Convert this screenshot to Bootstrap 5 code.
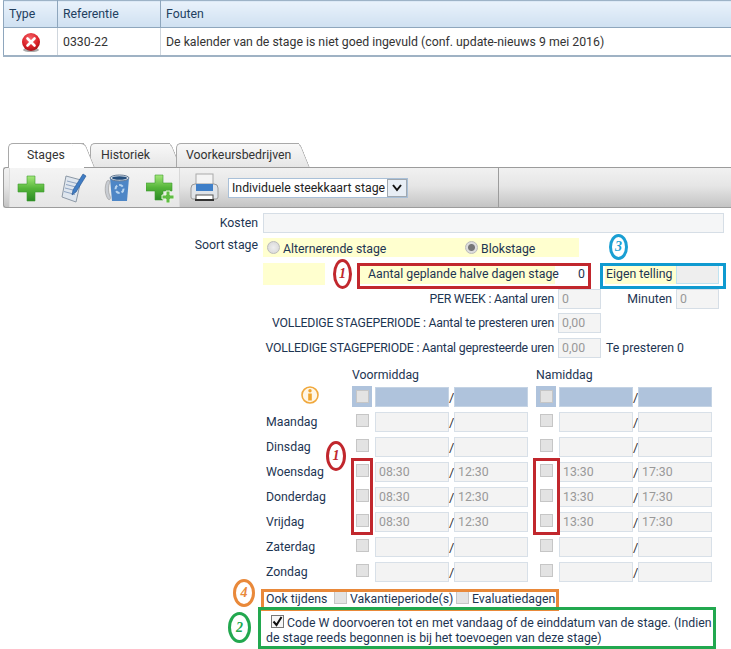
<!DOCTYPE html>
<html lang="nl">
<head>
<meta charset="utf-8">
<title>Stages</title>
<link href="https://cdn.jsdelivr.net/npm/bootstrap@5.3.0/dist/css/bootstrap.min.css" rel="stylesheet">
<style>
html,body{margin:0;background:#fff}
body{width:731px;height:649px;overflow:hidden;font-family:Roboto,"Noto Sans",sans-serif;font-size:12.300px;color:#1d3552;line-height:16px}
.err-wrap{padding:0 0 0 3px;height:142px}
.err-tbl{width:728px;border-collapse:collapse;table-layout:fixed;color:#333}
.err-tbl th{font-weight:400;height:27px;padding:0 5px;background:linear-gradient(#e9f2fb,#cfe0f1);border:1px solid #8ea6bd;border-top-color:#9db3c7;color:#22405f}
.err-tbl td{height:28px;padding:2px 5px 0;border:1px solid #cfd6dd;border-bottom:2px solid #9fb2c4}
.err-tbl td:first-child,.err-tbl th:first-child{border-left:1px solid #8ea6bd}
.err-tbl td:last-child,.err-tbl th:last-child{border-right:0}
.tabstrip{height:25px;padding-left:8px;align-items:flex-end;position:relative;z-index:2}
.tabx{position:relative;height:24px;line-height:23px;color:#333;background:linear-gradient(#f8f8f8,#e6e6e6);border:1px solid #a9a9a9;border-bottom:0;border-right:0;border-radius:5px 0 0 0}
.tabx::after{content:"";position:absolute;top:-1px;right:-6px;width:14px;height:24px;background:inherit;border:1px solid #a9a9a9;border-bottom:0;border-left:0;border-radius:0 5px 0 0;transform:skewX(22deg);z-index:-1}
.tabx.on{background:#fff;z-index:3;height:25px;margin-bottom:-1px}
.tabx.t1{width:76px;padding-left:18px;margin-right:6px}.tabx.t2{width:80px;padding-left:10px;margin-right:6px}.tabx.t3{width:123px;padding-left:9px}
.toolbar{height:41px;margin-left:3px;background:linear-gradient(#f1f1f1 0,#e6e6e6 45%,#c4c4c4 100%);border:1px solid #9c9c9c;border-right:0;border-radius:3px 0 0 3px;position:relative}
.toolgrp{margin:0 0 0 5px;width:171px;height:39px;background:linear-gradient(#f4f4f4,#e6e6e6);border-right:1px solid #d8d8d8;border-left:1px solid #dcdcdc;gap:15px;padding:3px 0 3px 7px}
.toolgrp2{padding-left:9px;gap:8px;flex:0 0 319px;border-right:1px solid #9c9c9c;height:39px}
.pick{width:180px;height:20px;border:1px solid #a9c0d8;border-radius:0;padding:0 20px 0 3px;font:12.300px Roboto,sans-serif;color:#222;background:#fff url("data:image/svg+xml,%3Csvg xmlns='http://www.w3.org/2000/svg' width='20' height='18'%3E%3Crect x='.5' y='.5' width='19' height='17' fill='%23e8eef5' stroke='%23a0a8b0'/%3E%3Cpath d='M6 6l4 5 4-5' fill='none' stroke='%23111' stroke-width='2'/%3E%3C/svg%3E") no-repeat right 0 center;appearance:none;-webkit-appearance:none}
.frm{position:relative;height:442px;padding-top:5px}
.rowx{display:flex;align-items:center}
.lab{width:258px;text-align:right;flex:none}
.fld{height:20px;background:#f4f4f4;border:1px solid #d6dee6;color:#999;padding:0 0 0 3px;line-height:18px;flex:none}
.kos{margin-left:5px;width:461px;background:#f5f6f7}
.soort{margin-left:5px;width:316px;height:19px;background:#ffffcf;padding-left:4px;margin-top:5px;padding-top:2px}
.rad{display:inline-block;width:13px;height:13px;border-radius:50%;border:1px solid #bbb;background:radial-gradient(#eee,#d5d5d5);margin:-3px 3px 0 0;flex:none}
.rad.sel{background:radial-gradient(#777 0 3px,#ddd 4px)}
.yel{background:#ffffcf;white-space:nowrap}
.r3{height:22px;margin-top:6px}
.rlab{width:554px;text-align:right;flex:none;white-space:nowrap;letter-spacing:-.22px}
.dayhead{height:16px;margin-top:9px;position:relative}
.daygrid{display:grid;grid-template-columns:263px 89px 20px 3px 74px 5px 74px 8px 20px 3px 74px 5px 74px;grid-auto-rows:25px;align-items:center;margin-top:1px;height:200px}
.dlab{margin-left:3px}
.cb{display:block;width:13px;height:13px;background:#e3e3e3;border:1px solid #c6c6c6;margin:0 auto 3px;justify-self:center}
.bluecell{height:21px;background:#afc3dc;display:flex;align-items:center;justify-content:center}
.bluecell .cb{margin:0}
.tm{height:20px;background:#f3f3f3;border:1px solid #d8e0e8;color:#999;padding-left:3px;line-height:19px}
.tm.blue{background:#afc3dc;border-color:#c4d3e4}
.sl{text-align:center;color:#333;font-size:13px;line-height:16px;padding-top:3px}
.ook{margin:5px 0 0 266px;height:20px}
.ook .cb{margin:0 3px 4px 0}
.cod{margin:6px 0 0 266px;width:448px;line-height:15px}
.cktick{display:inline-block;width:13px;height:13px;border:1px solid #777;background:#f6f6f6;margin:0 3px 0 5px;vertical-align:-1px}
.cktick svg{display:block}
.infoic{position:absolute;left:301px;top:178px}
.box{position:absolute;border:3px solid;pointer-events:none}
.red{border-color:#c1272d}.blu{border-color:#0f9ad0}.ora{border-color:#e9893a}.gre{border-color:#22a84f}
.ring{position:absolute;border:3px solid;border-radius:50%;display:flex;align-items:center;justify-content:center;font:italic 700 14px "Liberation Serif",serif}
.ring.red{color:#c1272d}.ring.blu{color:#1a9fd3}.ring.ora{color:#e9893a}.ring.gre{color:#22a84f}
</style>
</head>
<body>
<div class="err-wrap">
<table class="err-tbl">
<colgroup><col style="width:54px"><col style="width:103px"><col></colgroup>
<tr><th>Type</th><th>Referentie</th><th>Fouten</th></tr>
<tr>
<td class="text-center"><svg width="22" height="20" viewBox="0 0 22 20"><defs><radialGradient id="er" cx=".45" cy=".3" r=".8"><stop offset="0" stop-color="#f7656a"/><stop offset=".6" stop-color="#d81f26"/><stop offset="1" stop-color="#8e0f14"/></radialGradient></defs><ellipse cx="11" cy="18" rx="8" ry="2" fill="#aaa"/><circle cx="11" cy="10" r="9" fill="url(#er)"/><path d="M7.500 6.500l7 7m0-7l-7 7" stroke="#fff" stroke-width="2.600" stroke-linecap="round"/></svg></td>
<td>0330-22</td>
<td>De kalender van de stage is niet goed ingevuld (conf. update-nieuws 9 mei 2016)</td>
</tr>
</table>
</div>
<div class="d-flex tabstrip">
<div class="tabx t1 on">Stages</div>
<div class="tabx t2">Historiek</div>
<div class="tabx t3">Voorkeursbedrijven</div>
</div>
<div class="toolbar d-flex align-items-center">
<div class="toolgrp d-flex align-items-center">
<svg width="28" height="28" viewBox="0 0 28 28"><defs><linearGradient id="gp" x1="0" y1="0" x2="0" y2="1"><stop offset="0" stop-color="#a4e87a"/><stop offset=".5" stop-color="#55b53a"/><stop offset="1" stop-color="#2b8a24"/></linearGradient></defs><path d="M10 2h8v8h9v8h-9v9h-8v-9H1v-8h9z" fill="url(#gp)" stroke="#3c9a30" stroke-width=".6"/></svg>
<svg width="28" height="30" viewBox="0 0 28 30"><path d="M6 3l15 4-5 22-14-5z" fill="#dfe6ee" stroke="#8d99a6"/><path d="M7 8l12 3M6 11.500l12 3M5 15l12 3M4 18.500l11 3" stroke="#8ea4c2"/><path d="M26 3L16 19l-4 3 1-5L23 1z" fill="#3f7cc4" stroke="#22528e" stroke-width=".6"/></svg>
<svg width="28" height="30" viewBox="0 0 28 30"><path d="M7 5h19l-2 23H9z" fill="#4e86c6"/><ellipse cx="16.500" cy="5" rx="9.500" ry="3" fill="#d5dee8" stroke="#6a7f97"/><ellipse cx="16.500" cy="5" rx="7.500" ry="1.800" fill="#26507f"/><path d="M4 8c-3 6-2 14 1 18 2 2 3-1 2-3-2-4-2-10 0-14 0-2-2-2-3-1z" fill="#c8ccd2" stroke="#888" stroke-width=".5"/><circle cx="16.500" cy="16" r="4" fill="none" stroke="#b8d4ef" stroke-width="2" stroke-dasharray="4 2"/></svg>
<svg width="29" height="30" viewBox="0 0 29 30"><path d="M9 2h8v8h9v8h-9v9H9v-9H0v-8h9z" fill="url(#gp)" stroke="#3c9a30" stroke-width=".6"/><path d="M20 18h4v4h4v4h-4v4h-4v-4h-4v-4h4z" fill="#5fbd43" stroke="#eaf5e2"/></svg>
</div>
<div class="toolgrp2 d-flex align-items-center">
<svg width="31" height="30" viewBox="0 0 31 30"><rect x="7" y="1" width="17" height="12" fill="#f4f4f4" stroke="#aaa"/><path d="M2 15q0-4 4-4h19q4 0 4 4v9q0 2-2 2H4q-2 0-2-2z" fill="#dfe3e8" stroke="#999"/><rect x="7" y="11" width="17" height="7" fill="#3f7fc8"/><rect x="7" y="22" width="17" height="5" fill="#fff" stroke="#555"/><rect x="6" y="26" width="19" height="2" fill="#333"/></svg>
<select class="pick" aria-label="Afdruk"><option>Individuele steekkaart stage</option></select>
</div>
</div>
<div class="frm">
<div class="rowx"><div class="lab">Kosten</div><div class="fld kos"></div></div>
<div class="rowx" style="height:24px"><div class="lab">Soort stage</div><div class="soort d-flex align-items-center"><span class="rad"></span><span style="width:182px">Alternerende stage</span><span class="rad sel"></span><span>Blokstage</span></div></div>
<div class="rowx r3">
<div class="yel" style="margin-left:263px;width:62px;height:22px"></div>
<div class="yel" style="margin-left:35px;width:195px;height:20px;padding-left:8px;line-height:20px">Aantal geplande halve dagen stage</div>
<div style="width:30px;text-align:right">0</div>
<div class="yel" style="margin-left:20px;width:71px;height:20px;padding-left:1px;line-height:20px">Eigen telling</div>
<div class="fld" style="width:43px;background:#eee;border-color:#bfe3f1"></div>
</div>
<div class="rowx" style="margin-top:4px"><div class="rlab">PER WEEK : Aantal uren</div><div class="fld ms-1" style="width:43px">0</div><div style="width:71px;text-align:right">Minuten</div><div class="fld ms-1" style="width:43px">0</div></div>
<div class="rowx" style="margin-top:4px"><div class="rlab">VOLLEDIGE STAGEPERIODE : Aantal te presteren uren</div><div class="fld ms-1" style="width:43px">0,00</div></div>
<div class="rowx" style="margin-top:5px"><div class="rlab">VOLLEDIGE STAGEPERIODE : Aantal gepresteerde uren</div><div class="fld ms-1" style="width:43px">0,00</div><div style="margin-left:5px">Te presteren 0</div></div>
<div class="dayhead d-flex"><span style="margin-left:352px;width:184px">Voormiddag</span><span>Namiddag</span></div>
<div class="daygrid" id="dg"></div>
<div class="ook d-flex align-items-center"><span style="width:68px">Ook tijdens</span><span class="cb"></span><span style="width:106px">Vakantieperiode(s)</span><span class="cb"></span><span>Evaluatiedagen</span></div>
<div class="cod"><span class="cktick"><svg width="11" height="11" viewBox="0 0 11 11"><path d="M1.500 5.500l3 3.500 5-8" fill="none" stroke="#111" stroke-width="2"/></svg></span>Code W doorvoeren tot en met vandaag of de einddatum van de stage. (Indien de stage reeds begonnen is bij het toevoegen van deze stage)</div>
<svg class="infoic" width="18" height="18" viewBox="0 0 18 18"><circle cx="9" cy="9" r="8" fill="#fff6e6" stroke="#f0a83c" stroke-width="1.600"/><circle cx="9" cy="4.800" r="1.700" fill="#efa52f"/><rect x="7.200" y="7.500" width="3.600" height="7" fill="#efa52f"/></svg>
<div class="box red" style="left:357px;top:55px;width:234px;height:26px"></div>
<div class="box blu" style="left:600px;top:55px;width:126px;height:26px"></div>
<div class="box red" style="left:351px;top:250px;width:22px;height:77px"></div>
<div class="box red" style="left:533px;top:250px;width:27px;height:77px"></div>
<div class="box ora" style="left:261px;top:381px;width:298px;height:22px"></div>
<div class="box gre" style="left:258px;top:399px;width:458px;height:42px"></div>
<div class="ring red" style="left:333px;top:51px;width:19px;height:30px">1</div>
<div class="ring blu" style="left:609px;top:26px;width:19px;height:26px">3</div>
<div class="ring red" style="left:326px;top:233px;width:20px;height:30px">1</div>
<div class="ring ora" style="left:233px;top:371px;width:22px;height:28px">4</div>
<div class="ring gre" style="left:228px;top:404px;width:23px;height:31px">2</div>
</div>
<script>
var days=[["",0,1],["Maandag",0],["Dinsdag",0],["Woensdag",1],["Donderdag",1],["Vrijdag",1],["Zaterdag",0],["Zondag",0]];
var h="";
days.forEach(function(d){
  var cbx=d[2]?'<div class="bluecell"><span class="cb"></span></div>':'<span class="cb"></span>';
  var cl=d[2]?' blue':'';
  var t=function(v){return '<div class="tm'+cl+'">'+(d[1]?v:'')+'</div>'};
  h+='<div></div><div class="dlab">'+d[0]+'</div>'+cbx+'<div></div>'+t('08:30')+'<div class="sl">/</div>'+t('12:30')+'<div></div>'+cbx+'<div></div>'+t('13:30')+'<div class="sl">/</div>'+t('17:30');
});
document.getElementById('dg').innerHTML=h;
</script>
<script src="https://cdn.jsdelivr.net/npm/bootstrap@5.3.0/dist/js/bootstrap.bundle.min.js"></script>
</body>
</html>
